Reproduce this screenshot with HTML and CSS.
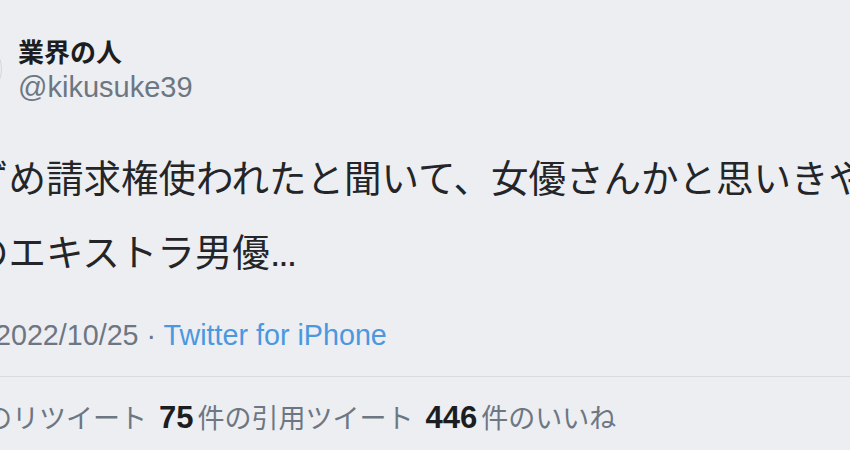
FILE: index.html
```html
<!DOCTYPE html>
<html lang="ja">
<head>
<meta charset="utf-8">
<link rel="stylesheet" href="styles.css">
</head>
<body>
<main class="tweet">
  <header class="author">
    <div class="avatar"></div>
    <div class="names">
      <div class="name">業界の人</div>
      <div class="handle">@kikusuke39</div>
    </div>
  </header>
  <div class="text">
    <p class="line">ずめ請求権使われたと聞いて、女優さんかと思いきや</p>
    <p class="line">のエキストラ男優<span class="dots">...</span></p>
  </div>
  <div class="meta">2022/10/25 · <span class="source">Twitter for iPhone</span></div>
  <div class="stats">
    <span class="stat"><span class="label">のリツイート</span></span>
    <span class="stat"><b class="num">75</b><span class="label">件の引用ツイート</span></span>
    <span class="stat"><b class="num">446</b><span class="label">件のいいね</span></span>
  </div>
</main>
</body>
</html>
```
FILE: styles.css
```css
html, body {
  margin: 0;
  padding: 0;
  background: #eceef1;
  overflow: hidden;
  width: 850px;
  height: 450px;
}
.tweet {
  font-family: "Noto Sans CJK JP", "Noto Sans", sans-serif;
  color: #1f2124;
}
.author {
  display: flex;
  align-items: center;
  gap: 16px;
  margin-left: -62px;
  padding-top: 33px;
}
.avatar {
  width: 62px;
  height: 62px;
  border-radius: 50%;
  border: 1px solid #d3d6da;
  flex: none;
}
.names {
  display: flex;
  flex-direction: column;
}
.name {
  font-weight: 700;
  font-size: 26px;
  line-height: 36px;
  color: #1b1d20;
}
.handle {
  font-family: "Liberation Sans", "Noto Sans", sans-serif;
  font-size: 29px;
  line-height: 36px;
  color: #6c7783;
}
.text {
  margin-top: 34px;
  margin-left: -29px;
  font-size: 37.5px;
  white-space: nowrap;
  color: #232528;
}
.line {
  margin: 0;
  line-height: 74px;
}
.dots {
  font-family: "Liberation Sans", sans-serif;
  letter-spacing: -2px;
}
.meta {
  margin-top: 23px;
  margin-left: -5px;
  font-family: "Liberation Sans", "Noto Sans", sans-serif;
  font-size: 28.7px;
  line-height: 44px;
  color: #6c7783;
  padding-bottom: 19px;
  border-bottom: 1px solid #d8dce0;
}
.source {
  color: #4a98e0;
}
.stats {
  display: flex;
  gap: 12px;
  margin-left: -15px;
  padding-top: 20px;
  font-size: 27px;
  line-height: 40px;
  white-space: nowrap;
}
.stat {
  display: flex;
  align-items: baseline;
  gap: 4px;
}
.num {
  font-family: "Liberation Sans", sans-serif;
  font-weight: 700;
  font-size: 31px;
  color: #1b1d20;
}
.label {
  color: #6c7783;
}
```
